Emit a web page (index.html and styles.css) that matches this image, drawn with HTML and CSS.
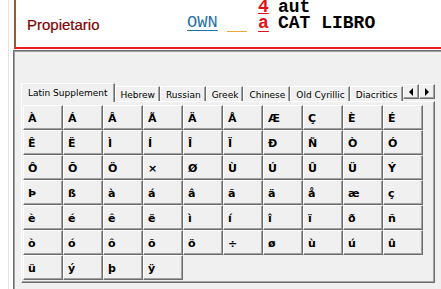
FILE: index.html
```html
<!DOCTYPE html>
<html>
<head>
<meta charset="utf-8">
<link rel="stylesheet" href="styles.css">
</head>
<body>
<div class="page">
  <div class="record">
    <div class="label">Propietario</div>
    <div class="field">
      <span class="ind row1">4</span>
      <span class="txt row1">aut</span>
      <span class="tag row2">OWN</span>
      <span class="blank row2"></span>
      <span class="ind row2">a</span>
      <span class="txt row2">CAT LIBRO</span>
    </div>
  </div>
  <div class="panel">
    <div class="tabstrip">
      <div class="tab active">Latin Supplement</div>
      <div class="tab">Hebrew</div>
      <div class="tab">Russian</div>
      <div class="tab">Greek</div>
      <div class="tab">Chinese</div>
      <div class="tab">Old Cyrillic</div>
      <div class="tab">Diacritics</div>
      <div class="scroller">
        <span class="arrow"><svg width="5" height="8" viewBox="0 0 5 8"><path d="M4 0 L4 8 L0 4 Z" fill="#000"/></svg></span>
        <span class="arrow"><svg width="5" height="8" viewBox="0 0 5 8"><path d="M0 0 L0 8 L4 4 Z" fill="#000"/></svg></span>
      </div>
    </div>
    <div class="frame">
      <div class="chars">
        <span class="cell">À</span><span class="cell">Á</span><span class="cell">Â</span><span class="cell">Ã</span><span class="cell">Ä</span><span class="cell">Å</span><span class="cell">Æ</span><span class="cell">Ç</span><span class="cell">È</span><span class="cell">É</span>
        <span class="cell">Ê</span><span class="cell">Ë</span><span class="cell">Ì</span><span class="cell">Í</span><span class="cell">Î</span><span class="cell">Ï</span><span class="cell">Ð</span><span class="cell">Ñ</span><span class="cell">Ò</span><span class="cell">Ó</span>
        <span class="cell">Ô</span><span class="cell">Õ</span><span class="cell">Ö</span><span class="cell">×</span><span class="cell">Ø</span><span class="cell">Ù</span><span class="cell">Ú</span><span class="cell">Û</span><span class="cell">Ü</span><span class="cell">Ý</span>
        <span class="cell">Þ</span><span class="cell">ß</span><span class="cell">à</span><span class="cell">á</span><span class="cell">â</span><span class="cell">ã</span><span class="cell">ä</span><span class="cell">å</span><span class="cell">æ</span><span class="cell">ç</span>
        <span class="cell">è</span><span class="cell">é</span><span class="cell">ê</span><span class="cell">ë</span><span class="cell">ì</span><span class="cell">í</span><span class="cell">î</span><span class="cell">ï</span><span class="cell">ð</span><span class="cell">ñ</span>
        <span class="cell">ò</span><span class="cell">ó</span><span class="cell">ô</span><span class="cell">õ</span><span class="cell">ö</span><span class="cell">÷</span><span class="cell">ø</span><span class="cell">ù</span><span class="cell">ú</span><span class="cell">û</span>
        <span class="cell">ü</span><span class="cell">ý</span><span class="cell">þ</span><span class="cell">ÿ</span>
      </div>
    </div>
  </div>
</div>
</body>
</html>
```

FILE: styles.css
```css
html, body {
  margin: 0;
  padding: 0;
}
body {
  width: 441px;
  height: 289px;
  overflow: hidden;
  background: linear-gradient(to right, #ffffff 8px, #e3e3e3 8px, #e3e3e3 9px, #ffffff 9px);
}
.page {
  margin-left: 13px;
  height: 289px;
  display: flex;
  flex-direction: column;
}

/* top record */
.record {
  margin-left: 1px;
  height: 47px;
  border-left: 2px solid #9b5a35;
  border-bottom: 2px solid #ec1c24;
  background: #ffffff;
  padding-left: 11px;
  display: flex;
  align-items: flex-start;
  overflow: hidden;
  margin-bottom: 1px;
}
.label {
  width: 160px;
  flex: none;
  padding-top: 16px;
  font-family: "Liberation Sans", Arial, sans-serif;
  font-size: 15px;
  line-height: 17px;
  color: #7d0000;
  -webkit-text-stroke: 0.2px #7d0000;
}
.field {
  margin-top: -1px;
  display: grid;
  grid-template-columns: 40px 31px 20px auto;
  grid-template-rows: 16px 16px;
  font-family: "Liberation Mono", "Courier New", monospace;
  font-size: 18px;
  line-height: 16px;
  white-space: pre;
}
.row1 { grid-row: 1; }
.row2 { grid-row: 2; }
.tag {
  grid-column: 1;
  font-size: 17px;
  color: #1f72a6;
  text-decoration: underline;
  text-underline-offset: 3px;
  text-decoration-thickness: 1px;
}
.blank {
  grid-column: 2;
  align-self: end;
  width: 20px;
  height: 1px;
  background: #f2a33a;
  margin-bottom: -1px;
}
.ind {
  grid-column: 3;
  color: #e3101a;
  font-weight: bold;
  text-decoration: underline;
  text-underline-offset: 3px;
  text-decoration-thickness: 1px;
}
.ind.row1 {
  text-underline-offset: 1px;
}
.txt {
  grid-column: 4;
  color: #000000;
  font-weight: bold;
}

/* panel */
.panel {
  flex: 1;
  background: #f0f0f0;
  border-top: 1px solid #6d6d6d;
  border-left: 1px solid #6d6d6d;
  box-shadow: inset 1px 1px 0 #a0a0a0;
  padding: 32px 0 0 7px;
}
.tabstrip {
  width: 414px;
  height: 19px;
  margin-bottom: -1px;
  display: flex;
  align-items: flex-end;
  font-family: "DejaVu Sans", Verdana, sans-serif;
  font-size: 9px;
  line-height: 12px;
  color: #000000;
}
.tab {
  box-sizing: border-box;
  height: 15px;
  margin-bottom: 1px;
  padding: 2px 4px 0 5px;
  background: #f0f0f0;
  border-top: 1px solid #ffffff;
  border-left: 1px solid #ffffff;
  border-right: 1px solid #6d6d6d;
  box-shadow: inset -1px 0 0 #a0a0a0;
  white-space: nowrap;
}
.tab.active {
  height: 19px;
  margin-bottom: 0;
  padding: 3px 6px 0 6px;
  position: relative;
  z-index: 1;
}
.scroller {
  margin-left: auto;
  align-self: flex-start;
  margin-top: 1px;
  display: flex;
}
.arrow {
  box-sizing: border-box;
  width: 16px;
  height: 15px;
  display: flex;
  align-items: center;
  justify-content: center;
  background: #f0f0f0;
  border-top: 1px solid #ffffff;
  border-left: 1px solid #ffffff;
  border-right: 1px solid #6d6d6d;
  border-bottom: 1px solid #6d6d6d;
  box-shadow: inset -1px -1px 0 #a0a0a0;
}
.frame {
  box-sizing: border-box;
  width: 414px;
  border-top: 1px solid #ffffff;
  border-left: 1px solid #ffffff;
  border-right: 1px solid #6d6d6d;
  border-bottom: 1px solid #6d6d6d;
  box-shadow: inset -1px -1px 0 #a0a0a0;
  padding: 3px 0 2px 1px;
}
.chars {
  display: grid;
  grid-template-columns: repeat(10, 40px);
  grid-auto-rows: 25px;
}
.cell {
  box-sizing: border-box;
  display: block;
  border-top: 1px solid #ffffff;
  border-left: 1px solid #ffffff;
  border-right: 1px solid #6d6d6d;
  border-bottom: 1px solid #6d6d6d;
  box-shadow: inset -1px -1px 0 #a0a0a0;
  padding: 7px 0 0 4px;
  font-family: "DejaVu Sans", Verdana, sans-serif;
  font-weight: bold;
  font-size: 11px;
  line-height: 12px;
  color: #000000;
}
```
